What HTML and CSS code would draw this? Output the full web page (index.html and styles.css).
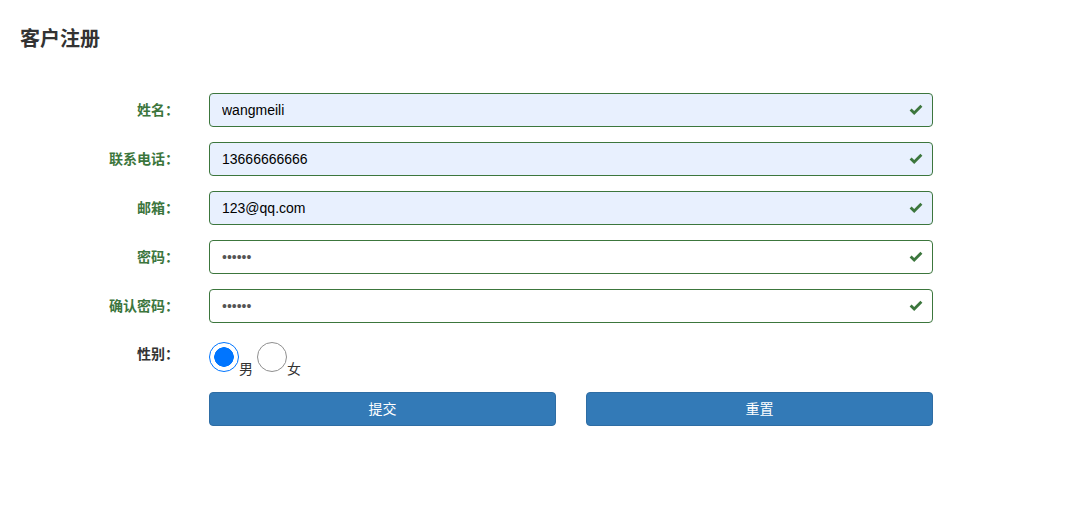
FILE: index.html
```html
<!DOCTYPE html>
<html lang="zh-CN">
<head>
    <meta charset="UTF-8">
    <meta name="viewport" content="width=device-width, initial-scale=1.0">
    <title>客户注册</title>
    <link rel="stylesheet" href="styles.css">
</head>
<body>
    <div class="page">
        <h3 class="page-title">客户注册</h3>

        <form class="reg-form">
            <div class="form-row success">
                <label class="form-label" for="username">姓名：</label>
                <div class="field">
                    <input type="text" id="username" class="form-input filled" value="wangmeili">
                    <svg class="ok-icon" viewBox="0 0 14 12"><path d="M0.6 6.4 L2.6 4.4 L5.2 7 L11.4 0.8 L13.4 2.8 L5.2 11 Z"/></svg>
                </div>
            </div>

            <div class="form-row success">
                <label class="form-label" for="phone">联系电话：</label>
                <div class="field">
                    <input type="text" id="phone" class="form-input filled" value="13666666666">
                    <svg class="ok-icon" viewBox="0 0 14 12"><path d="M0.6 6.4 L2.6 4.4 L5.2 7 L11.4 0.8 L13.4 2.8 L5.2 11 Z"/></svg>
                </div>
            </div>

            <div class="form-row success">
                <label class="form-label" for="email">邮箱：</label>
                <div class="field">
                    <input type="text" id="email" class="form-input filled" value="123@qq.com">
                    <svg class="ok-icon" viewBox="0 0 14 12"><path d="M0.6 6.4 L2.6 4.4 L5.2 7 L11.4 0.8 L13.4 2.8 L5.2 11 Z"/></svg>
                </div>
            </div>

            <div class="form-row success">
                <label class="form-label" for="password">密码：</label>
                <div class="field">
                    <input type="password" id="password" class="form-input" value="123456">
                    <svg class="ok-icon" viewBox="0 0 14 12"><path d="M0.6 6.4 L2.6 4.4 L5.2 7 L11.4 0.8 L13.4 2.8 L5.2 11 Z"/></svg>
                </div>
            </div>

            <div class="form-row success">
                <label class="form-label" for="password2">确认密码：</label>
                <div class="field">
                    <input type="password" id="password2" class="form-input" value="123456">
                    <svg class="ok-icon" viewBox="0 0 14 12"><path d="M0.6 6.4 L2.6 4.4 L5.2 7 L11.4 0.8 L13.4 2.8 L5.2 11 Z"/></svg>
                </div>
            </div>

            <div class="form-row gender-row">
                <label class="form-label">性别：</label>
                <div class="radios">
                    <input type="radio" name="sex" class="radio" checked><span class="radio-text">男</span>
                    <input type="radio" name="sex" class="radio"><span class="radio-text">女</span>
                </div>
            </div>

            <div class="form-row">
                <div class="form-label"></div>
                <div class="buttons">
                    <button type="button" class="btn">提交</button>
                    <button type="reset" class="btn">重置</button>
                </div>
            </div>
        </form>
    </div>
</body>
</html>
```

FILE: styles.css
```css
:root {
    --success-color: #3c763d;
    --primary-color: #337ab7;
    --primary-border: #2e6da4;
    --text-color: #333;
}

body {
    margin: 0;
    font-family: 'Liberation Sans', 'Noto Sans CJK SC', sans-serif;
    font-size: 14px;
    color: var(--text-color);
    background: white;
}

.page {
    padding: 0 20px;
}

.page-title {
    margin: 28px 0 43px;
    font-size: 20px;
    line-height: 22px;
    font-weight: 700;
}

.form-row {
    display: flex;
    margin-bottom: 15px;
}

.form-label {
    width: 159px;
    flex-shrink: 0;
    margin-right: 30px;
    padding-top: 9px;
    text-align: right;
    font-size: 14px;
    font-weight: 700;
    line-height: 17px;
}

.success .form-label {
    color: var(--success-color);
}

.field {
    position: relative;
    width: 724px;
}

.form-input {
    display: block;
    box-sizing: border-box;
    width: 100%;
    height: 34px;
    padding: 6px 12px;
    border: 1px solid #ccc;
    border-radius: 4px;
    font-family: 'Liberation Sans', sans-serif;
    font-size: 14px;
    color: #555;
    background: white;
    outline: none;
}

.success .form-input {
    border-color: var(--success-color);
}

.form-input.filled {
    color: #000;
    background-color: #e8f0fe;
}

.ok-icon {
    position: absolute;
    top: 11px;
    right: 10px;
    width: 14px;
    height: 12px;
    fill: var(--success-color);
}

.gender-row .form-label {
    padding-top: 8px;
    color: var(--text-color);
}

.radios {
    display: flex;
    align-items: flex-end;
    padding-top: 4px;
    height: 35px;
}

.radio {
    appearance: none;
    box-sizing: border-box;
    width: 30px;
    height: 30px;
    margin: 0;
    border: 1px solid #8f8f8f;
    border-radius: 50%;
    background: white;
    align-self: flex-start;
}

.radio:checked {
    border: 1.5px solid #0075ff;
    background: radial-gradient(circle, #0075ff 0 9.5px, white 10px);
}

.radio-text {
    margin-right: 4px;
    font-size: 14px;
    line-height: 16px;
    color: #333;
}

.buttons {
    display: flex;
    gap: 30px;
    width: 724px;
}

.btn {
    flex: 1;
    height: 34px;
    padding: 0 0 2px;
    border: 1px solid var(--primary-border);
    border-radius: 4px;
    background-color: var(--primary-color);
    color: white;
    font-family: 'Liberation Sans', 'Noto Sans CJK SC', sans-serif;
    font-size: 14px;
    cursor: pointer;
}
```
